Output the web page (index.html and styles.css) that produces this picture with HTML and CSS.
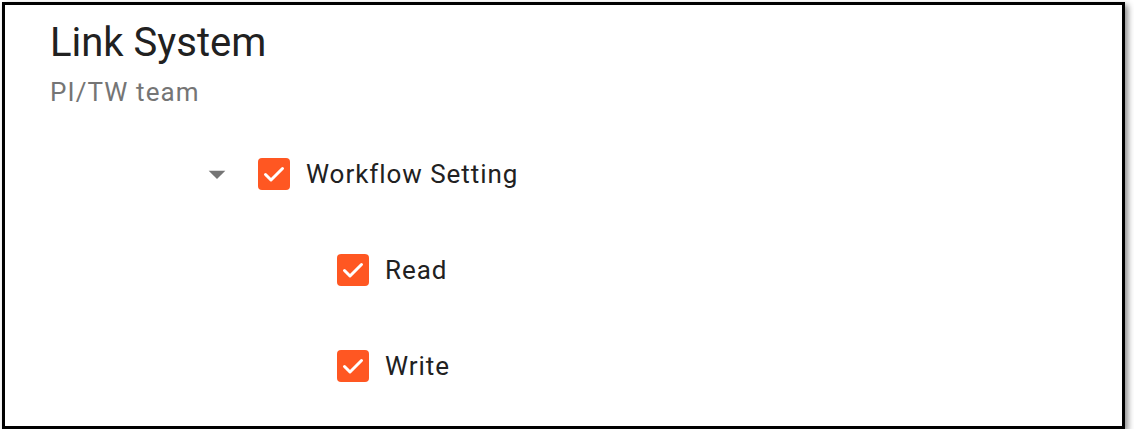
FILE: index.html
```html
<!DOCTYPE html>
<html lang="en">
<head>
    <meta charset="UTF-8">
    <meta name="viewport" content="width=device-width, initial-scale=1.0">
    <title>Link System</title>
    <link rel="stylesheet" href="styles.css">
</head>
<body>
    <div class="card">
        <div class="card-header">
            <h1 class="card-title">Link System</h1>
            <div class="card-subtitle">PI/TW team</div>
        </div>

        <div class="tree">
            <div class="tree-row">
                <span class="toggle">
                    <svg viewBox="0 0 24 24" width="40" height="40"><path d="M7 10l5 5 5-5z" fill="#757575"/></svg>
                </span>
                <span class="checkbox checked">
                    <svg viewBox="0 0 32 32" width="32" height="32"><polyline points="7.5,16.5 13,22 24.5,10.5" fill="none" stroke="#fff" stroke-width="3" stroke-linecap="round" stroke-linejoin="round"/></svg>
                </span>
                <span class="label">Workflow Setting</span>
            </div>

            <div class="tree-children">
                <div class="tree-row">
                    <span class="checkbox checked">
                        <svg viewBox="0 0 32 32" width="32" height="32"><polyline points="7.5,16.5 13,22 24.5,10.5" fill="none" stroke="#fff" stroke-width="3" stroke-linecap="round" stroke-linejoin="round"/></svg>
                    </span>
                    <span class="label">Read</span>
                </div>
                <div class="tree-row">
                    <span class="checkbox checked">
                        <svg viewBox="0 0 32 32" width="32" height="32"><polyline points="7.5,16.5 13,22 24.5,10.5" fill="none" stroke="#fff" stroke-width="3" stroke-linecap="round" stroke-linejoin="round"/></svg>
                    </span>
                    <span class="label">Write</span>
                </div>
            </div>
        </div>
    </div>
</body>
</html>
```

FILE: styles.css
```css
:root {
    --accent-color: #ff5722;
    --text-color: #212121;
    --muted-color: #757575;
}

* {
    box-sizing: border-box;
    margin: 0;
    padding: 0;
}

body {
    font-family: Roboto, 'Liberation Sans', sans-serif;
    background: #fff;
    color: var(--text-color);
}

.card {
    margin: 2px 0 0 2px;
    width: 1123px;
    height: 427px;
    border: 3px solid #000;
    background: #fff;
    box-shadow: 3px 3px 6px rgba(0, 0, 0, 0.45);
    padding: 14px 45px 0;
}

.card-title {
    font-size: 40px;
    line-height: 48px;
    font-weight: 400;
    color: var(--text-color);
}

.card-subtitle {
    margin-top: 9px;
    font-size: 26px;
    line-height: 32px;
    letter-spacing: 1.1px;
    color: var(--muted-color);
}

.tree {
    margin: 50px 0 0 147px;
    display: flex;
    flex-direction: column;
    gap: 64px;
}

.tree-children {
    margin-left: 140px;
    display: flex;
    flex-direction: column;
    gap: 64px;
}

.tree-row {
    display: flex;
    align-items: center;
    height: 32px;
}

.toggle {
    width: 40px;
    height: 40px;
    margin-right: 21px;
    display: flex;
}

.checkbox {
    width: 32px;
    height: 32px;
    border-radius: 4px;
    display: flex;
    flex-shrink: 0;
}

.checkbox.checked {
    background: var(--accent-color);
}

.label {
    margin-left: 16px;
    font-size: 26px;
    line-height: 32px;
    letter-spacing: 0.95px;
    color: var(--text-color);
}
```
